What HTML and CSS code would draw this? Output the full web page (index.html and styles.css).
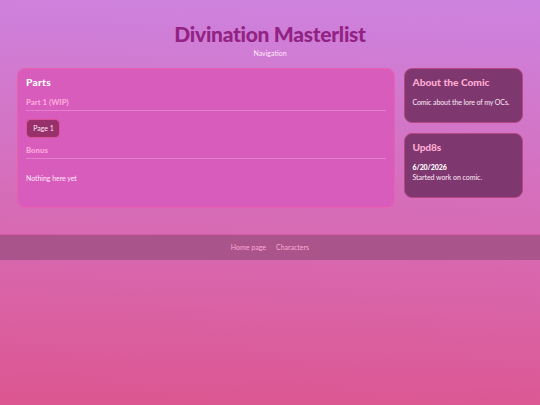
FILE: index.html
```html
<!DOCTYPE html>
<html lang="en">
<head>
<meta charset="utf-8">
<title>Divination Masterlist</title>
<link rel="stylesheet" href="styles.css">
</head>
<body>
<header class="header">
  <h1 class="title">Divination Masterlist</h1>
  <p class="subtitle">Navigation</p>
</header>
<div class="layout">
  <main class="card parts">
    <h2 class="heading parts-heading">Parts</h2>
    <h3 class="section part-one">Part 1 (WIP)</h3>
    <a class="page-link">Page 1</a>
    <h3 class="section bonus">Bonus</h3>
    <p class="empty">Nothing here yet</p>
  </main>
  <aside class="sidebar">
    <section class="card panel about">
      <h2 class="heading about-heading">About the Comic</h2>
      <p class="text description">Comic about the lore of my OCs.</p>
    </section>
    <section class="card panel updates">
      <h2 class="heading updates-heading">Upd8s</h2>
      <p class="text news"><strong class="date">6/20/2026</strong><br><span class="entry">Started work on comic.</span></p>
    </section>
  </aside>
</div>
<footer class="footer">
  <a class="home">Home page</a>
  <a class="characters">Characters</a>
</footer>
</body>
</html>
```
FILE: styles.css
```css
* { box-sizing: border-box; }
html { height: 100%; }
body {
  margin: 0;
  min-height: 100%;
  background: linear-gradient(182deg, #cd83e0 0%, #d868b0 61%, #dc5690 100%);
  color: #ffe8f8;
  font: 7px/10px Lato, "Open Sans", sans-serif;
}
h1, h2, h3, p { margin: 0; }
.header { height: 68px; padding-top: 21px; text-align: center; }
.title { color: #922383; font-size: 21px; line-height: 26px; font-weight: 900; letter-spacing: -0.3px; }
.subtitle { margin-top: 1px; line-height: 10px; }
.layout {
  display: grid;
  grid-template-columns: 378px 119px;
  column-gap: 9px;
  align-items: start;
  width: 506px;
  margin: 0 auto;
}
.card { border: 1px solid #ea60b1; border-radius: 8px; padding: 7px 8px; }
.parts { height: 140px; background: #d75cbc; }
.sidebar { display: flex; flex-direction: column; gap: 10px; }
.panel { background: #7e386f; border-color: #b84682; padding-left: 7.5px; }
.about { height: 55px; }
.updates { height: 65px; }
.heading { font-size: 10.2px; line-height: 13px; font-weight: 900; color: #ffaad2; }
.parts-heading { color: #fff; letter-spacing: 0.25px; }
.updates-heading { letter-spacing: -0.2px; }
.section { height: 14px; border-bottom: 1px solid #e57ed0; color: #ffaadc; font-size: 7.6px; line-height: 11px; font-weight: 900; letter-spacing: 0.1px; }
.part-one { margin-top: 8px; }
.page-link { display: block; width: 34px; height: 19px; margin: 8px 0 7px; padding-left: 1px; border: 1px solid #df5197; border-radius: 5px; background: #98306c; text-align: center; line-height: 17px; }
.empty { margin-top: 14px; letter-spacing: -0.05px; }
.text { margin-top: 8px; }
.news { margin-top: 8px; }
.description { letter-spacing: -0.1px; }
.date { color: #fff; font-weight: 900; letter-spacing: -0.1px; }
.entry { letter-spacing: -0.05px; }
.footer { display: flex; justify-content: center; gap: 10px; height: 26px; margin-top: 26px; border-top: 1px solid #d85aa4; background: #a9548a; color: #ffaad8; line-height: 25px; }
```
